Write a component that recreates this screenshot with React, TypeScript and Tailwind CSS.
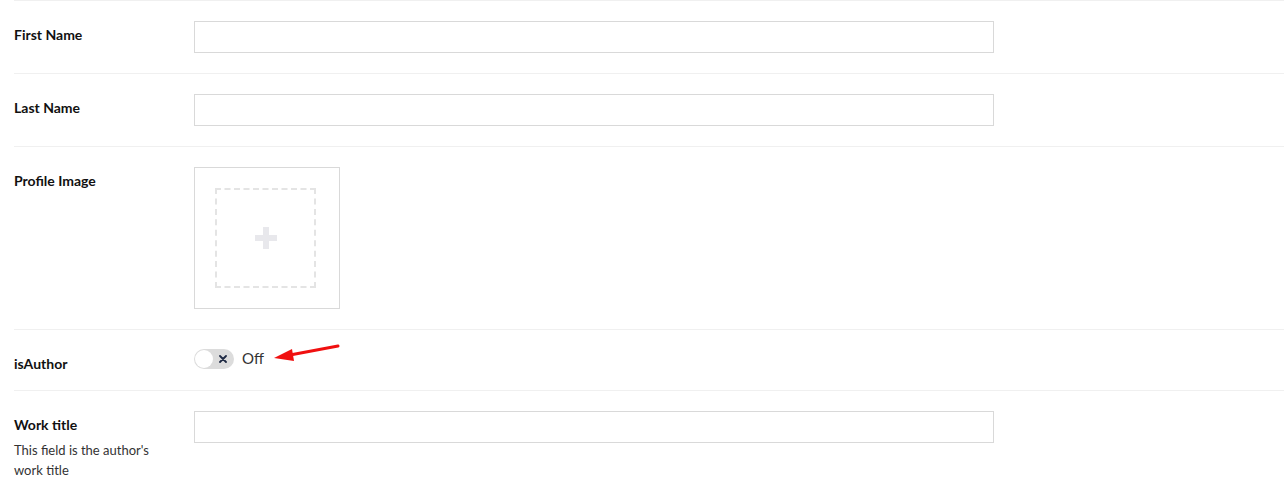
import React from "react";

function Row({ children, className = "" }: { children: React.ReactNode; className?: string }) {
  return <div className={`flex border-t border-[#f0f0f0] ${className}`}>{children}</div>;
}

export default function App() {
  return (
    <div className="w-[1284px] h-[487px] bg-white overflow-hidden pl-[14px]" style={{ fontFamily: "Lato, 'Noto Sans', sans-serif" }}>
      <Row className="h-[73px] pt-[20px]">
        <div className="w-[180px] shrink-0 pt-[3px] text-[14px] font-bold text-[#111]">First Name</div>
        <input className="w-[800px] h-[32px] border border-[#d9d9d9] outline-none" />
      </Row>
      <Row className="h-[73px] pt-[20px]">
        <div className="w-[180px] shrink-0 pt-[3px] text-[14px] font-bold text-[#111]">Last Name</div>
        <input className="w-[800px] h-[32px] border border-[#d9d9d9] outline-none" />
      </Row>
      <Row className="h-[183px] pt-[20px]">
        <div className="w-[180px] shrink-0 pt-[3px] text-[14px] font-bold text-[#111]">Profile Image</div>
        <div className="w-[146px] h-[142px] border border-[#d9d9d9] flex items-center justify-start pl-[20px]">
          <div className="w-[101px] h-[100px] border-2 border-dashed border-[#e4e4e4] flex items-center justify-center">
            <svg width="22" height="22" viewBox="0 0 22 22">
              <rect x="8" y="0" width="6" height="22" fill="#e8e8ec" />
              <rect x="0" y="8" width="22" height="6" fill="#e8e8ec" />
            </svg>
          </div>
        </div>
      </Row>
      <Row className="h-[61px] relative">
        <div className="w-[180px] shrink-0 pt-[23px] text-[14px] font-bold text-[#111]">isAuthor</div>
        <div className="flex items-center gap-[8px] pt-[19px] self-start">
          <div className="w-[40px] h-[20px] rounded-full bg-[#dcdcdc] flex items-center justify-between pl-[1px] pr-[7px]">
            <div className="w-[18px] h-[18px] rounded-full bg-white" />
            <svg width="8" height="8" viewBox="0 0 8 8">
              <path d="M1 1L7 7M7 1L1 7" stroke="#1f2a44" strokeWidth="1.8" strokeLinecap="round" />
            </svg>
          </div>
          <span className="text-[15px] text-[#333] leading-none -mt-[1px]">Off</span>
        </div>
        <svg className="absolute left-[256px] top-[12px]" width="74" height="24" viewBox="0 0 74 24">
          <path d="M68 4 L20 13" stroke="#f01010" strokeWidth="3" strokeLinecap="round" />
          <path d="M4 16 L22 7 L24 19 Z" fill="#f01010" />
        </svg>
      </Row>
      <Row className="h-[97px] pt-[20px]">
        <div className="w-[180px] shrink-0 pt-[3px]">
          <div className="text-[14px] font-bold text-[#111]">Work title</div>
          <div className="text-[13px] text-[#333] leading-[20px] mt-[5px] w-[150px]">This field is the author's work title</div>
        </div>
        <input className="w-[800px] h-[32px] border border-[#d9d9d9] outline-none" />
      </Row>
    </div>
  );
}
